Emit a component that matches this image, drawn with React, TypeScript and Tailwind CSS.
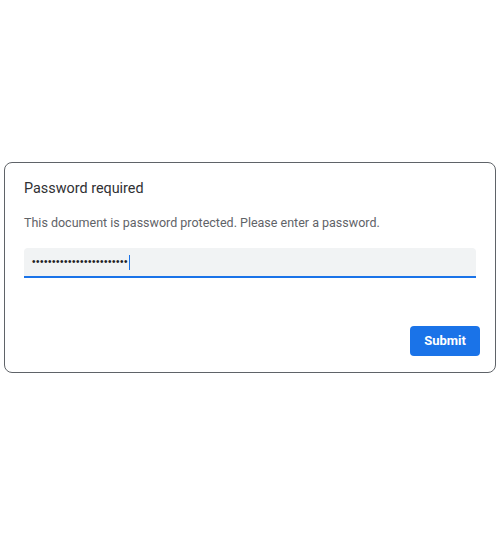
export default function App() {
  const dots = "•".repeat(24);

  return (
    <div className="min-h-[536px] w-[500px] bg-white pt-[162px] pl-[4px] font-['Roboto',sans-serif]">
      <div className="w-[492px] rounded-[8px] border border-[#5f6368] bg-white">
        <div className="px-[19px] pt-[16px]">
          <h1 className="text-[14.4px] leading-[20px] text-[#303134]">Password required</h1>
          <p className="mt-[14px] text-[12.5px] leading-[20px] text-[#5f6368]">
            This document is password protected. Please enter a password.
          </p>
          <div className="mt-[15px] flex h-[30px] items-center rounded-t-[4px] border-b-2 border-[#1a73e8] bg-[#f1f3f4] pl-[8px]">
            <span className="font-['Liberation_Sans',sans-serif] text-[10px] leading-none tracking-[0.5px] text-[#202124]">
              {dots}
            </span>
            <span className="ml-px h-[15px] w-px bg-[#1a73e8]" />
          </div>
        </div>
        <div className="flex justify-end pt-[48px] pr-[15px] pb-[16px]">
          <button className="h-[30px] w-[70px] rounded-[4px] bg-[#1a73e8] text-[13px] font-bold text-white">
            Submit
          </button>
        </div>
      </div>
    </div>
  );
}
